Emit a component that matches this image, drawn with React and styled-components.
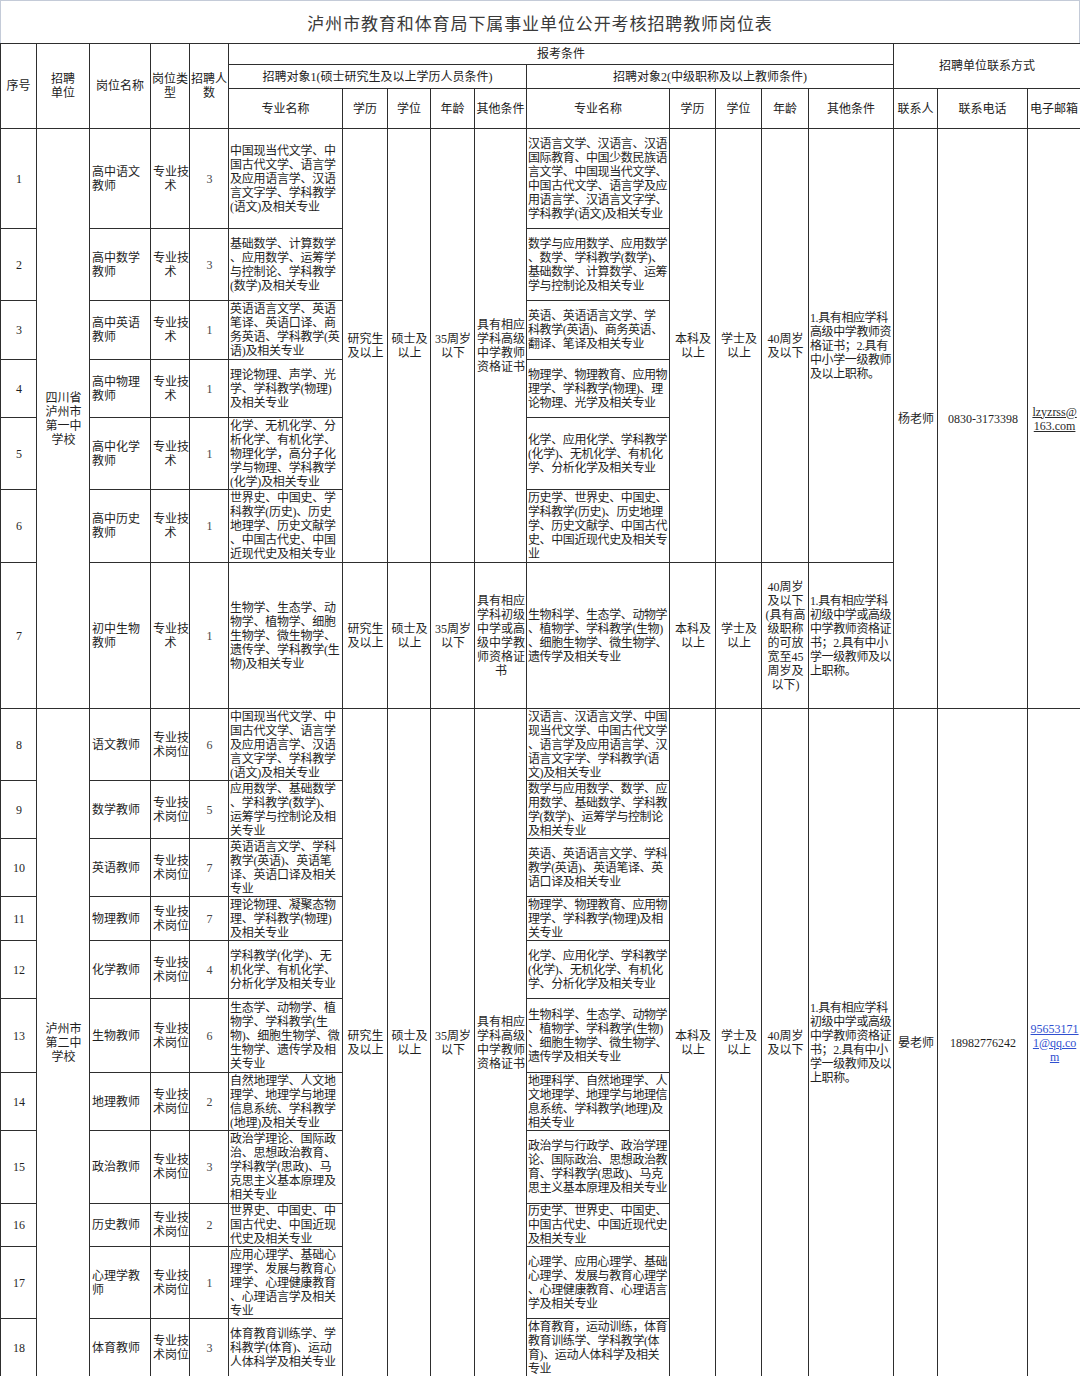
import React from 'react';
import styled, { createGlobalStyle } from 'styled-components';

const Global = createGlobalStyle`
  html, body { margin: 0; padding: 0; background: #fff; }
  body { font-family: "Liberation Serif", "Noto Sans CJK SC", serif; color: #1f1f1f; }
`;

const Page = styled.div`
  width: 1080px;
  overflow: hidden;
`;

const TitleBar = styled.div`
  box-sizing: border-box;
  height: 43px;
  border: 1px solid #c4cbd8;
  border-bottom: none;
  display: flex;
  align-items: center;
  justify-content: center;
  font-family: "Noto Sans CJK SC", sans-serif;
  font-size: 17px;
  letter-spacing: 0.9px;
  color: #3a3a3a;
`;

const Sheet = styled.table`
  width: 1080px;
  table-layout: fixed;
  border-collapse: collapse;
  font-size: 12px;
  line-height: 14px;
`;

const Row = styled.tr`
  height: ${(p) => p.$h}px;
`;

const HeadCell = styled.th`
  border: 1px solid #2e2e2e;
  padding: 0 1px;
  font-weight: normal;
  text-align: center;
  vertical-align: middle;
  white-space: pre;
  color: #222;
`;

const Cell = styled.td`
  border: 1px solid #2e2e2e;
  padding: 0 1px 0 ${(p) => (p.$tight ? 1 : 2)}px;
  vertical-align: middle;
  text-align: ${(p) => p.$align || 'center'};
  white-space: pre;
  overflow: hidden;
  letter-spacing: ${(p) => (p.$tight ? `${p.$tight}px` : 'normal')};
  color: ${(p) => (p.$soft ? '#444' : '#1f1f1f')};
`;

const Mail = styled.span`
  text-decoration: underline;
  color: ${(p) => p.$color};
`;

const COLS = [36, 53, 61, 39, 39, 114, 45, 43, 44, 52, 143, 46, 46, 47, 85, 44, 90, 53];

const T1 = '专业技\n术';
const T2 = '专业技\n术岗位';

const ROWS = [
  { h: 100, post: '高中语文\n教师', type: T1, n: '3',
    m1: '中国现当代文学、中\n国古代文学、语言学\n及应用语言学、汉语\n言文字学、学科教学\n(语文)及相关专业',
    m2: '汉语言文学、汉语言、汉语\n国际教育、中国少数民族语\n言文学、中国现当代文学、\n中国古代文学、语言学及应\n用语言学、汉语言文字学、\n学科教学(语文)及相关专业' },
  { h: 72, post: '高中数学\n教师', type: T1, n: '3',
    m1: '基础数学、计算数学\n、应用数学、运筹学\n与控制论、学科教学\n(数学)及相关专业',
    m2: '数学与应用数学、应用数学\n、数学、学科教学(数学)、\n基础数学、计算数学、运筹\n学与控制论及相关专业' },
  { h: 59, post: '高中英语\n教师', type: T1, n: '1',
    m1: '英语语言文学、英语\n笔译、英语口译、商\n务英语、学科教学(英\n语)及相关专业',
    m2: '英语、英语语言文学、学\n科教学(英语)、商务英语、\n翻译、笔译及相关专业' },
  { h: 58, post: '高中物理\n教师', type: T1, n: '1',
    m1: '理论物理、声学、光\n学、学科教学(物理)\n及相关专业',
    m2: '物理学、物理教育、应用物\n理学、学科教学(物理)、理\n论物理、光学及相关专业' },
  { h: 72, post: '高中化学\n教师', type: T1, n: '1',
    m1: '化学、无机化学、分\n析化学、有机化学、\n物理化学，高分子化\n学与物理、学科教学\n(化学)及相关专业',
    m2: '化学、应用化学、学科教学\n(化学)、无机化学、有机化\n学、分析化学及相关专业' },
  { h: 73, post: '高中历史\n教师', type: T1, n: '1',
    m1: '世界史、中国史、学\n科教学(历史)、历史\n地理学、历史文献学\n、中国古代史、中国\n近现代史及相关专业',
    m2: '历史学、世界史、中国史、\n学科教学(历史)、历史地理\n学、历史文献学、中国古代\n史、中国近现代史及相关专\n业' },
  { h: 146, post: '初中生物\n教师', type: T1, n: '1',
    m1: '生物学、生态学、动\n物学、植物学、细胞\n生物学、微生物学、\n遗传学、学科教学(生\n物)及相关专业',
    m2: '生物科学、生态学、动物学\n、植物学、学科教学(生物)\n、细胞生物学、微生物学、\n遗传学及相关专业' },
  { h: 72, post: '语文教师', type: T2, n: '6',
    m1: '中国现当代文学、中\n国古代文学、语言学\n及应用语言学、汉语\n言文字学、学科教学\n(语文)及相关专业',
    m2: '汉语言、汉语言文学、中国\n现当代文学、中国古代文学\n、语言学及应用语言学、汉\n语言文字学、学科教学(语\n文)及相关专业' },
  { h: 58, post: '数学教师', type: T2, n: '5',
    m1: '应用数学、基础数学\n、学科教学(数学)、\n运筹学与控制论及相\n关专业',
    m2: '数学与应用数学、数学、应\n用数学、基础数学、学科教\n学(数学)、运筹学与控制论\n及相关专业' },
  { h: 58, post: '英语教师', type: T2, n: '7',
    m1: '英语语言文学、学科\n教学(英语)、英语笔\n译、英语口译及相关\n专业',
    m2: '英语、英语语言文学、学科\n教学(英语)、英语笔译、英\n语口译及相关专业' },
  { h: 44, post: '物理教师', type: T2, n: '7',
    m1: '理论物理、凝聚态物\n理、学科教学(物理)\n及相关专业',
    m2: '物理学、物理教育、应用物\n理学、学科教学(物理)及相\n关专业' },
  { h: 58, post: '化学教师', type: T2, n: '4',
    m1: '学科教学(化学)、无\n机化学、有机化学、\n分析化学及相关专业',
    m2: '化学、应用化学、学科教学\n(化学)、无机化学、有机化\n学、分析化学及相关专业' },
  { h: 74, post: '生物教师', type: T2, n: '6',
    m1: '生态学、动物学、植\n物学、学科教学(生\n物)、细胞生物学、微\n生物学、遗传学及相\n关专业',
    m2: '生物科学、生态学、动物学\n、植物学、学科教学(生物)\n、细胞生物学、微生物学、\n遗传学及相关专业' },
  { h: 58, post: '地理教师', type: T2, n: '2',
    m1: '自然地理学、人文地\n理学、地理学与地理\n信息系统、学科教学\n(地理)及相关专业',
    m2: '地理科学、自然地理学、人\n文地理学、地理学与地理信\n息系统、学科教学(地理)及\n相关专业' },
  { h: 73, post: '政治教师', type: T2, n: '3',
    m1: '政治学理论、国际政\n治、思想政治教育、\n学科教学(思政)、马\n克思主义基本原理及\n相关专业',
    m2: '政治学与行政学、政治学理\n论、国际政治、思想政治教\n育、学科教学(思政)、马克\n思主义基本原理及相关专业' },
  { h: 43, post: '历史教师', type: T2, n: '2',
    m1: '世界史、中国史、中\n国古代史、中国近现\n代史及相关专业',
    m2: '历史学、世界史、中国史、\n中国古代史、中国近现代史\n及相关专业' },
  { h: 72, post: '心理学教\n师', type: T2, n: '1',
    m1: '应用心理学、基础心\n理学、发展与教育心\n理学、心理健康教育\n、心理语言学及相关\n专业',
    m2: '心理学、应用心理学、基础\n心理学、发展与教育心理学\n、心理健康教育、心理语言\n学及相关专业' },
  { h: 58, post: '体育教师', type: T2, n: '3',
    m1: '体育教育训练学、学\n科教学(体育)、运动\n人体科学及相关专业',
    m2: '体育教育，运动训练，体育\n教育训练学、学科教学(体\n育)、运动人体科学及相关\n专业' },
];

const OTH1_HIGH = '具有相应\n学科高级\n中学教师\n资格证书';
const OTH1_LOW = '具有相应\n学科初级\n中学或高\n级中学教\n师资格证\n书';
const OTH2_HIGH = '1.具有相应学科\n高级中学教师资\n格证书；2.具有\n中小学一级教师\n及以上职称。';
const OTH2_LOW = '1.具有相应学科\n初级中学或高级\n中学教师资格证\n书；2.具有中小\n学一级教师及以\n上职称。';

const GROUPS = {
  0: { span: 6, oth1: OTH1_HIGH, age2: '40周岁\n及以下', oth2: OTH2_HIGH },
  6: { span: 1, oth1: OTH1_LOW, age2: '40周岁\n及以下\n(具有高\n级职称\n的可放\n宽至45\n周岁及\n以下)', oth2: OTH2_LOW },
  7: { span: 11, oth1: OTH1_HIGH, age2: '40周岁\n及以下', oth2: OTH2_LOW },
};

const UNITS = {
  0: { span: 7, name: '四川省\n泸州市\n第一中\n学校', person: '杨老师', phone: '0830-3173398', mail: 'lzyzrss@\n163.com', mailColor: '#2a2a2a' },
  7: { span: 11, name: '泸州市\n第二中\n学校', person: '晏老师', phone: '18982776242', mail: '95653171\n1@qq.co\nm', mailColor: '#2f4fd0' },
};

function BodyRow({ r, i }) {
  const g = GROUPS[i];
  const u = UNITS[i];
  return (
    <Row $h={r.h}>
      <Cell>{String(i + 1)}</Cell>
      {u && <Cell rowSpan={u.span}>{u.name}</Cell>}
      <Cell $align="left">{r.post}</Cell>
      <Cell>{r.type}</Cell>
      <Cell $soft>{r.n}</Cell>
      <Cell $align="left" $tight={-0.25}>{r.m1}</Cell>
      {g && (
        <>
          <Cell rowSpan={g.span}>{'研究生\n及以上'}</Cell>
          <Cell rowSpan={g.span}>{'硕士及\n以上'}</Cell>
          <Cell rowSpan={g.span}>{'35周岁\n以下'}</Cell>
          <Cell rowSpan={g.span}>{g.oth1}</Cell>
        </>
      )}
      <Cell $align="left" $tight={-0.4}>{r.m2}</Cell>
      {g && (
        <>
          <Cell rowSpan={g.span}>{'本科及\n以上'}</Cell>
          <Cell rowSpan={g.span}>{'学士及\n以上'}</Cell>
          <Cell rowSpan={g.span}>{g.age2}</Cell>
          <Cell rowSpan={g.span} $align="left" $tight={-0.4}>{g.oth2}</Cell>
        </>
      )}
      {u && (
        <>
          <Cell rowSpan={u.span}>{u.person}</Cell>
          <Cell rowSpan={u.span}>{u.phone}</Cell>
          <Cell rowSpan={u.span}>
            <Mail $color={u.mailColor}>{u.mail}</Mail>
          </Cell>
        </>
      )}
    </Row>
  );
}

export default function App() {
  return (
    <Page>
      <Global />
      <TitleBar>泸州市教育和体育局下属事业单位公开考核招聘教师岗位表</TitleBar>
      <Sheet>
        <colgroup>
          {COLS.map((w, k) => (
            <col key={k} style={{ width: w }} />
          ))}
        </colgroup>
        <thead>
          <Row $h={21}>
            <HeadCell rowSpan={3}>序号</HeadCell>
            <HeadCell rowSpan={3}>{'招聘\n单位'}</HeadCell>
            <HeadCell rowSpan={3}>岗位名称</HeadCell>
            <HeadCell rowSpan={3}>{'岗位类\n型'}</HeadCell>
            <HeadCell rowSpan={3}>{'招聘人\n数'}</HeadCell>
            <HeadCell colSpan={10}>报考条件</HeadCell>
            <HeadCell colSpan={3} rowSpan={2}>招聘单位联系方式</HeadCell>
          </Row>
          <Row $h={24}>
            <HeadCell colSpan={5}>招聘对象1(硕士研究生及以上学历人员条件)</HeadCell>
            <HeadCell colSpan={5}>招聘对象2(中级职称及以上教师条件)</HeadCell>
          </Row>
          <Row $h={40}>
            <HeadCell>专业名称</HeadCell>
            <HeadCell>学历</HeadCell>
            <HeadCell>学位</HeadCell>
            <HeadCell>年龄</HeadCell>
            <HeadCell>其他条件</HeadCell>
            <HeadCell>专业名称</HeadCell>
            <HeadCell>学历</HeadCell>
            <HeadCell>学位</HeadCell>
            <HeadCell>年龄</HeadCell>
            <HeadCell>其他条件</HeadCell>
            <HeadCell>联系人</HeadCell>
            <HeadCell>联系电话</HeadCell>
            <HeadCell>电子邮箱</HeadCell>
          </Row>
        </thead>
        <tbody>
          {ROWS.map((r, i) => (
            <BodyRow key={i} r={r} i={i} />
          ))}
        </tbody>
      </Sheet>
    </Page>
  );
}
